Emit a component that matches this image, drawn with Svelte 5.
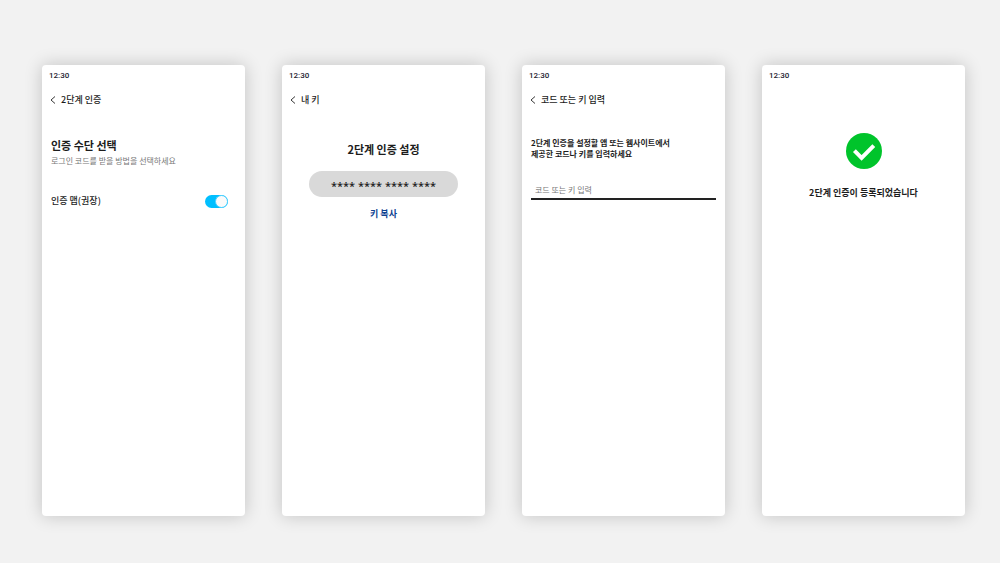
<script>
  let appAuth = $state(true);
  let code = $state('');
</script>

{#snippet back(title)}
  <header class="bar">
    <button class="back" type="button" aria-label="뒤로">
      <svg viewBox="0 0 6 8" width="6" height="8" aria-hidden="true">
        <path d="M5 0.5 1 4l4 3.5" fill="none" stroke="#222" stroke-width="0.9" />
      </svg>
    </button>
    <h1>{title}</h1>
  </header>
{/snippet}

<main class="board">
  <section class="screen">
    <div class="time">12:30</div>
    {@render back('2단계 인증')}
    <div class="body">
      <h2>인증 수단 선택</h2>
      <p class="hint">로그인 코드를 받을 방법을 선택하세요</p>
      <div class="option">
        <label for="app-auth">인증 맵(권장)</label>
        <input id="app-auth" class="switch" type="checkbox" role="switch" bind:checked={appAuth} />
      </div>
    </div>
  </section>

  <section class="screen">
    <div class="time">12:30</div>
    {@render back('내 키')}
    <div class="body centered">
      <h2>2단계 인증 설정</h2>
      <div class="key">**** **** **** ****</div>
      <button class="copy" type="button">키 복사</button>
    </div>
  </section>

  <section class="screen">
    <div class="time">12:30</div>
    {@render back('코드 또는 키 입력')}
    <div class="body entry">
      <label class="guide" for="code">2단계 인증을 설정할 앱 또는 웹사이트에서<br />제공한 코드나 키를 입력하세요</label>
      <input id="code" class="field" type="text" placeholder="코드 또는 키 입력" bind:value={code} />
    </div>
  </section>

  <section class="screen">
    <div class="time">12:30</div>
    <div class="done">
      <svg viewBox="0 0 36 36" width="36" height="36" aria-hidden="true">
        <circle cx="18" cy="18" r="18" fill="#00c42b" />
        <path d="M8.4 17.6 15.6 24.8 27.8 12.6" fill="none" stroke="#fff" stroke-width="4" />
      </svg>
      <p>2단계 인증이 등록되었습니다</p>
    </div>
  </section>
</main>

<style>
  :global(body) {
    margin: 0;
    background: #f2f2f2;
  }

  .board {
    box-sizing: border-box;
    min-height: 100vh;
    padding: 65px 35px 47px 42px;
    display: grid;
    grid-template-columns: repeat(4, 1fr);
    gap: 37px;
    font-family: "Noto Sans CJK KR", sans-serif;
    color: #1c1c1c;
  }

  .screen {
    background: #fff;
    border-radius: 4px;
    box-shadow: 0 0 18px rgba(0, 0, 0, 0.2);
    min-width: 0;
  }

  h1,
  h2,
  p {
    margin: 0;
  }

  button {
    border: 0;
    background: none;
    padding: 0;
    font: inherit;
    cursor: pointer;
  }

  .time {
    padding: 5px 7px 0;
    font-family: Roboto, sans-serif;
    font-size: 8px;
    line-height: 12px;
    font-weight: 500;
    color: #1d1b30;
  }

  .bar {
    display: flex;
    align-items: center;
    gap: 5px;
    padding: 10px 8px 0;
    height: 16px;
  }

  .back {
    display: flex;
  }

  h1 {
    font-size: 9px;
    line-height: 16px;
    font-weight: 500;
  }

  .body {
    padding: 28px 9px 0;
  }

  h2 {
    font-size: 11px;
    line-height: 18px;
    font-weight: 700;
  }

  .hint {
    font-size: 8px;
    line-height: 14px;
    color: #777;
  }

  .option {
    display: flex;
    align-items: center;
    justify-content: space-between;
    margin-top: 25px;
    padding-right: 8px;
    font-size: 9px;
    line-height: 16px;
    font-weight: 500;
  }

  .switch {
    appearance: none;
    display: flex;
    width: 23px;
    height: 13px;
    margin: 0;
    border-radius: 7px;
    background: #bbb;
    cursor: pointer;
  }

  .switch::before {
    content: "";
    box-sizing: border-box;
    width: 13px;
    height: 13px;
    border: 1px solid #bbb;
    border-radius: 50%;
    background: #fafafa;
  }

  .switch:checked {
    justify-content: flex-end;
    background: #00bfff;
  }

  .switch:checked::before {
    border-color: #4dd0ff;
  }

  .centered {
    display: flex;
    flex-direction: column;
    align-items: center;
    padding-top: 32px;
  }

  .key {
    box-sizing: border-box;
    width: 81%;
    margin-top: 13px;
    padding-top: 4px;
    border-radius: 13px;
    background: #d9d9d9;
    font-family: "Noto Sans", sans-serif;
    font-size: 11px;
    line-height: 22px;
    font-weight: 500;
    text-align: center;
  }

  .copy {
    margin-top: 9px;
    font-size: 9px;
    line-height: 16px;
    font-weight: 700;
    color: #0f4391;
  }

  .entry {
    padding-top: 29px;
  }

  .guide {
    display: block;
    font-size: 8px;
    line-height: 11px;
    font-weight: 700;
  }

  .field {
    box-sizing: border-box;
    width: 100%;
    margin-top: 24px;
    padding: 0 4px 1px;
    border: 0;
    border-bottom: 2px solid #222;
    outline: 0;
    background: none;
    font: inherit;
    font-size: 8px;
    line-height: 14px;
  }

  .field::placeholder {
    color: #777;
    opacity: 1;
  }

  .done {
    display: flex;
    flex-direction: column;
    align-items: center;
    gap: 16px;
    padding-top: 51px;
  }

  .done p {
    font-size: 9px;
    line-height: 16px;
    font-weight: 700;
  }
</style>
